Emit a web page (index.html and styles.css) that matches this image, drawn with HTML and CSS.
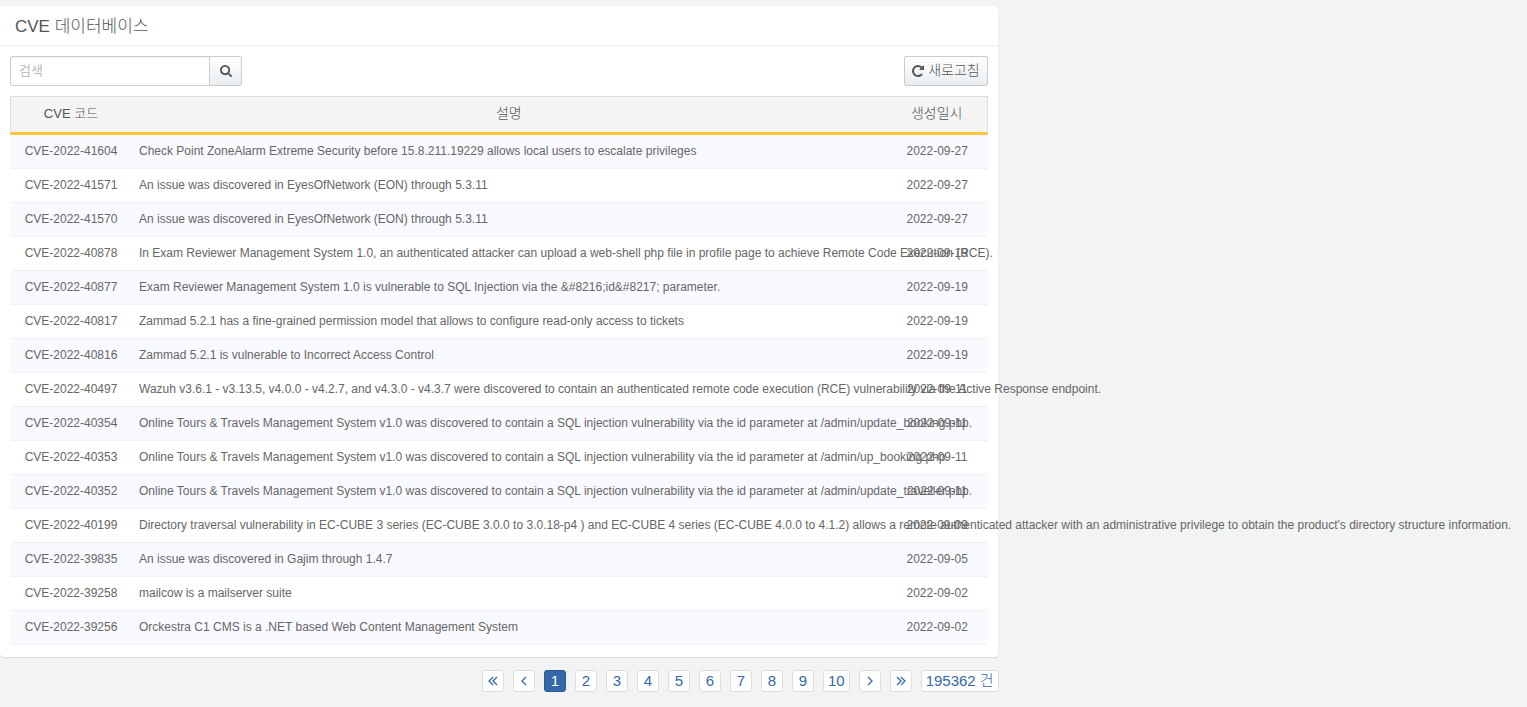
FILE: index.html
```html
<!DOCTYPE html>
<html lang="ko">
<head>
<meta charset="utf-8">
<title>CVE 데이터베이스</title>
<link rel="stylesheet" href="styles.css">
</head>
<body>
<main class="page">
  <section class="panel">
    <h1 class="panel-title">CVE 데이터베이스</h1>
    <div class="panel-body">
      <div class="toolbar">
        <form class="search" role="search">
          <input class="search-input" type="text" placeholder="검색" aria-label="검색">
          <button class="btn search-btn" type="button" aria-label="검색"><svg class="icon-search" viewBox="64 128 1664 1664" aria-hidden="true"><path d="M1216 832q0-185-131.500-316.500t-316.500-131.500-316.500 131.500-131.500 316.500 131.500 316.500 316.500 131.500 316.500-131.500 131.500-316.500zm512 832q0 52-38 90t-90 38q-54 0-90-38l-343-342q-179 124-399 124-143 0-273.500-55.500t-225-150-150-225-55.500-273.500 55.500-273.500 150-225 225-150 273.500-55.500 273.500 55.500 225 150 150 225 55.500 273.500q0 220-124 399l343 343q37 37 37 90z"/></svg></button>
        </form>
        <button class="btn refresh-btn" type="button"><svg class="icon-refresh" viewBox="128 128 1536 1536" aria-hidden="true"><path d="M1664 256v448q0 26-19 45t-45 19h-448q-42 0-59-40-17-39 14-69l138-138q-148-137-349-137-104 0-198.500 40.500t-163.500 109.500-109.500 163.500-40.500 198.500 40.500 198.500 109.500 163.500 163.500 109.500 198.500 40.500q119 0 225-52t179-147q7-10 23-12 15 0 25 9l137 138q9 8 9.500 20.500t-7.500 22.500q-109 132-264 204.500t-327 72.500q-156 0-298-61t-245-164-164-245-61-298 61-298 164-245 245-164 298-61q147 0 284.500 55.500t244.500 156.500l130-129q29-31 70-14 39 17 39 59z"/></svg>새로고침</button>
      </div>
      <table class="cve-table">
        <thead>
          <tr><th class="col-code" scope="col">CVE 코드</th><th scope="col">설명</th><th class="col-date" scope="col">생성일시</th></tr>
        </thead>
        <tbody>
          <tr><td>CVE-2022-41604</td><td>Check Point ZoneAlarm Extreme Security before 15.8.211.19229 allows local users to escalate privileges</td><td>2022-09-27</td></tr>
          <tr><td>CVE-2022-41571</td><td>An issue was discovered in EyesOfNetwork (EON) through 5.3.11</td><td>2022-09-27</td></tr>
          <tr><td>CVE-2022-41570</td><td>An issue was discovered in EyesOfNetwork (EON) through 5.3.11</td><td>2022-09-27</td></tr>
          <tr><td>CVE-2022-40878</td><td>In Exam Reviewer Management System 1.0, an authenticated attacker can upload a web-shell php file in profile page to achieve Remote Code Execution (RCE).</td><td>2022-09-19</td></tr>
          <tr><td>CVE-2022-40877</td><td>Exam Reviewer Management System 1.0 is vulnerable to SQL Injection via the &amp;#8216;id&amp;#8217; parameter.</td><td>2022-09-19</td></tr>
          <tr><td>CVE-2022-40817</td><td>Zammad 5.2.1 has a fine-grained permission model that allows to configure read-only access to tickets</td><td>2022-09-19</td></tr>
          <tr><td>CVE-2022-40816</td><td>Zammad 5.2.1 is vulnerable to Incorrect Access Control</td><td>2022-09-19</td></tr>
          <tr><td>CVE-2022-40497</td><td>Wazuh v3.6.1 - v3.13.5, v4.0.0 - v4.2.7, and v4.3.0 - v4.3.7 were discovered to contain an authenticated remote code execution (RCE) vulnerability via the Active Response endpoint.</td><td>2022-09-11</td></tr>
          <tr><td>CVE-2022-40354</td><td>Online Tours &amp; Travels Management System v1.0 was discovered to contain a SQL injection vulnerability via the id parameter at /admin/update_booking.php.</td><td>2022-09-11</td></tr>
          <tr><td>CVE-2022-40353</td><td>Online Tours &amp; Travels Management System v1.0 was discovered to contain a SQL injection vulnerability via the id parameter at /admin/up_booking.php.</td><td>2022-09-11</td></tr>
          <tr><td>CVE-2022-40352</td><td>Online Tours &amp; Travels Management System v1.0 was discovered to contain a SQL injection vulnerability via the id parameter at /admin/update_traveller.php.</td><td>2022-09-11</td></tr>
          <tr><td>CVE-2022-40199</td><td>Directory traversal vulnerability in EC-CUBE 3 series (EC-CUBE 3.0.0 to 3.0.18-p4 ) and EC-CUBE 4 series (EC-CUBE 4.0.0 to 4.1.2) allows a remote authenticated attacker with an administrative privilege to obtain the product's directory structure information.</td><td>2022-09-09</td></tr>
          <tr><td>CVE-2022-39835</td><td>An issue was discovered in Gajim through 1.4.7</td><td>2022-09-05</td></tr>
          <tr><td>CVE-2022-39258</td><td>mailcow is a mailserver suite</td><td>2022-09-02</td></tr>
          <tr><td>CVE-2022-39256</td><td>Orckestra C1 CMS is a .NET based Web Content Management System</td><td>2022-09-02</td></tr>
        </tbody>
      </table>
    </div>
  </section>
  <nav class="pagination" aria-label="페이지">
    <a class="page-link" href="#" aria-label="처음"><svg class="icon-angle" viewBox="0 0 10 10" aria-hidden="true"><path d="M5 1 1 5l4 4M9 1 5 5l4 4"/></svg></a>
    <a class="page-link" href="#" aria-label="이전"><svg class="icon-angle" viewBox="0 0 10 10" aria-hidden="true"><path d="M7 1 3 5l4 4"/></svg></a>
    <a class="page-link active" href="#" aria-current="page">1</a>
    <a class="page-link" href="#">2</a>
    <a class="page-link" href="#">3</a>
    <a class="page-link" href="#">4</a>
    <a class="page-link" href="#">5</a>
    <a class="page-link" href="#">6</a>
    <a class="page-link" href="#">7</a>
    <a class="page-link" href="#">8</a>
    <a class="page-link" href="#">9</a>
    <a class="page-link" href="#">10</a>
    <a class="page-link" href="#" aria-label="다음"><svg class="icon-angle" viewBox="0 0 10 10" aria-hidden="true"><path d="m3 1 4 4-4 4"/></svg></a>
    <a class="page-link" href="#" aria-label="마지막"><svg class="icon-angle" viewBox="0 0 10 10" aria-hidden="true"><path d="m1 1 4 4-4 4M5 1l4 4-4 4"/></svg></a>
    <a class="page-link" href="#">195362 건</a>
  </nav>
</main>
</body>
</html>
```
FILE: styles.css
```css
* {
  box-sizing: border-box;
}

body {
  margin: 0;
  background: #f2f4f4;
  color: #666;
  font: 12px/17px "Liberation Sans", "Noto Sans CJK KR", sans-serif;
}

button,
input {
  font: inherit;
}

.page {
  width: 65.4%;
  padding-top: 6px;
}

.panel {
  margin-right: 1px;
  background: #fff;
  border-radius: 4px;
  box-shadow: 0 1px 1px #d6d8d8;
}

.panel-title {
  margin: 0;
  padding: 9px 15px 6px;
  border-bottom: 1px solid #eee;
  color: #555;
  font-size: 17px;
  font-weight: 300;
  line-height: 24px;
}

.panel-body {
  padding: 10px 10px 12px;
}

.toolbar {
  display: flex;
  justify-content: space-between;
  margin-bottom: 10px;
}

.search {
  display: flex;
}

.search-input {
  width: 200px;
  height: 30px;
  padding: 3px 8px 5px;
  border: 1px solid #ccc;
  border-radius: 2px 0 0 2px;
  background: #fff;
  box-shadow: inset 0 1px 1px #eee;
  color: #555;
  font-size: 13px;
}

.search-input::placeholder {
  color: #bbb;
  opacity: 1;
}

.btn {
  display: flex;
  align-items: center;
  justify-content: center;
  height: 30px;
  padding: 0 7px 1px;
  border: 1px solid #ccc;
  border-radius: 2px;
  background: linear-gradient(#fff, #e9edf0);
  color: #555;
  font-size: 14px;
  font-weight: 300;
}

.search-btn {
  width: 33px;
  margin-left: -1px;
  border-radius: 0 2px 2px 0;
}

.refresh-btn {
  gap: 4px;
}

.icon-search,
.icon-refresh {
  width: 12px;
  height: 12px;
  fill: #555;
}

.cve-table {
  width: 100%;
  table-layout: fixed;
  border-collapse: separate;
  border-spacing: 0;
}

.cve-table th {
  height: 39px;
  padding: 0 8px 3px;
  border-top: 1px solid #ddd;
  border-bottom: 3px solid #fbc53c;
  background: #f4f4f4;
  color: #555;
  font-size: 14px;
  font-weight: 300;
}

.cve-table .col-code {
  width: 121px;
  border-left: 1px solid #ddd;
  font-size: 13px;
}

.cve-table .col-date {
  width: 101px;
  border-right: 1px solid #ddd;
}

.cve-table td {
  padding: 8px;
  border-bottom: 1px solid #f0f0f0;
  text-align: center;
  white-space: nowrap;
}

.cve-table td:first-child {
  border-left: 1px solid #fff;
}

.cve-table td:nth-child(2) {
  text-align: left;
}

.cve-table tbody tr:nth-child(odd) {
  background: #f9faff;
}

.pagination {
  display: flex;
  justify-content: flex-end;
  gap: 9px;
  padding: 13px 0 12px;
}

.page-link {
  display: flex;
  align-items: center;
  justify-content: center;
  min-width: 22px;
  height: 22px;
  padding: 0 4px;
  border: 1px solid #ddd;
  border-radius: 3px;
  background: #fff;
  color: #3468a8;
  font-size: 15px;
  line-height: 20px;
  font-weight: 300;
  white-space: nowrap;
  text-decoration: none;
}

.page-link.active {
  border-color: #285a94;
  background: #3468a8;
  color: #fff;
}

.icon-angle {
  width: 10px;
  height: 10px;
  fill: none;
  stroke: #3468a8;
  stroke-width: 1.3;
}
```
